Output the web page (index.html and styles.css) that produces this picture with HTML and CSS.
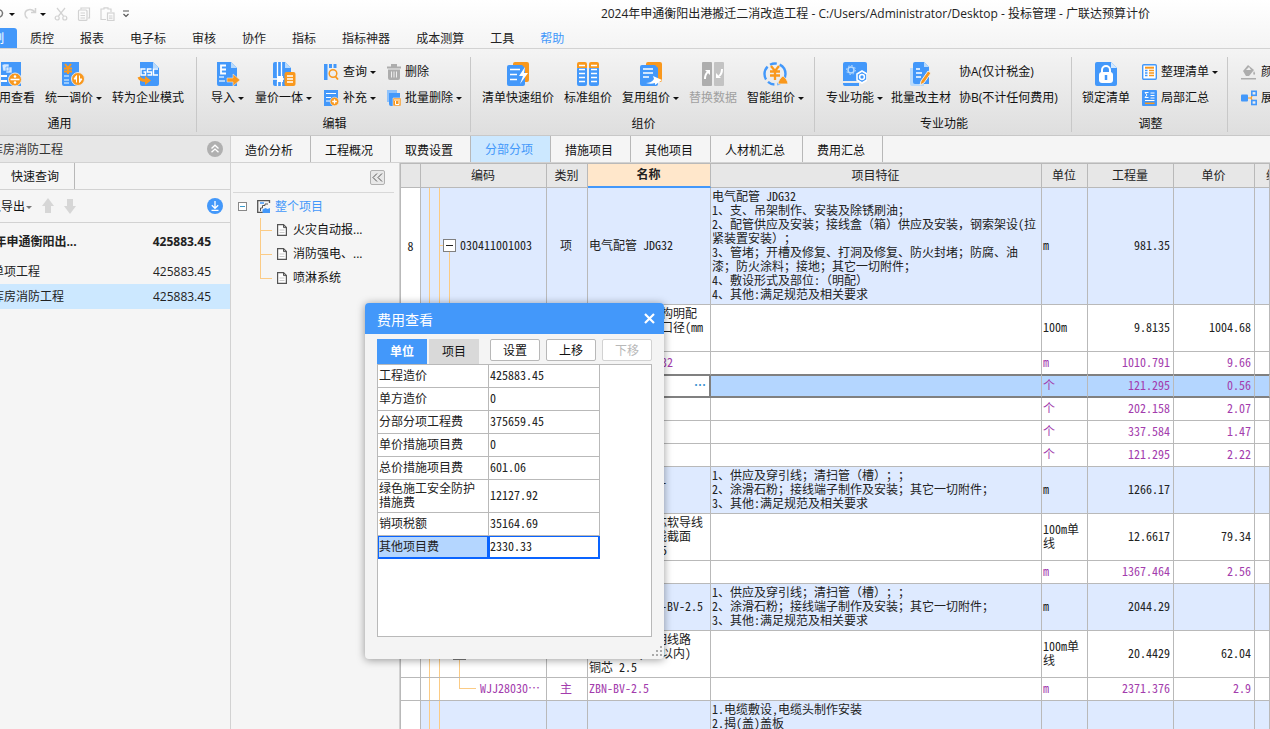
FILE: index.html
```html
<!DOCTYPE html>
<html lang="zh-CN">
<head>
<meta charset="utf-8">
<title>投标管理 - 广联达预算计价</title>
<link rel="stylesheet" href="styles.css">
</head>
<body>
<header class="top">
  <div class="titlebar">
    <div class="quick">
      <button class="qbtn undo" aria-label="撤销"><svg width="4" height="14" viewBox="6 0 4 14"><path d="M4 3c5-1 6 5 2 7" fill="none" stroke="#777" stroke-width="1.5"/></svg></button>
      <i class="caret"></i>
      <button class="qbtn redo" aria-label="恢复"><svg width="14" height="14" viewBox="0 0 14 14"><path d="M12.500 1v4.500h-4.500M12 5.500C9 1 2 2 2 7c0 2 1 3.500 2.500 4.500" fill="none" stroke="#d2d2d2" stroke-width="1.500"/></svg></button>
      <i class="caret"></i>
      <button class="qbtn cut" aria-label="剪切"><svg width="14" height="14" viewBox="0 0 14 14" fill="none" stroke="#d2d2d2" stroke-width="1.200"><path d="M3 1l6.500 8M11 1L4.500 9"/><circle cx="3.200" cy="11" r="2"/><circle cx="10.800" cy="11" r="2"/></svg></button>
      <button class="qbtn copy" aria-label="复制"><svg width="14" height="14" viewBox="0 0 14 14" fill="none" stroke="#d2d2d2" stroke-width="1.200"><path d="M4 2.500V1h8.500v10H11"/><rect x="1.500" y="3" width="8.500" height="10.400" rx="1"/><path d="M3.500 6h4.500M3.500 8.500h4.500M3.500 11h4.500"/></svg></button>
      <button class="qbtn paste" aria-label="粘贴"><svg width="15" height="14" viewBox="0 0 15 14" fill="none" stroke="#d2d2d2" stroke-width="1.200"><path d="M6 12.500H1V2h3V.800h4V2h3v3"/><rect x="7.500" y="6" width="6.500" height="7.500"/><path d="M9 9h3.500M9 11.200h3.500"/></svg></button>
      <button class="qbtn" aria-label="更多"><svg width="8" height="8" viewBox="0 0 8 8" fill="none" stroke="#555" stroke-width="1.200"><path d="M1 1h6M1.500 4l2.500 2.500L6.500 4"/></svg></button>
    </div>
    <h1 class="title">2024年申通衡阳出港搬迁二消改造工程 - C:/Users/Administrator/Desktop - 投标管理 - 广联达预算计价</h1>
  </div>
  <nav class="menu">
    <button class="mtab on">编制</button><button class="mtab">质控</button><button class="mtab">报表</button><button class="mtab">电子标</button><button class="mtab">审核</button><button class="mtab">协作</button><button class="mtab">指标</button><button class="mtab">指标神器</button><button class="mtab">成本测算</button><button class="mtab">工具</button><button class="mtab help">帮助</button>
  </nav>
</header>

<section class="ribbon">
  <div class="group g1">
    <div class="tools">
      <button class="big"><svg width="24" height="24" viewBox="0 0 24 24"><path d="M2 0h20v24H2z" fill="#4398fa"/><path d="M3 3l2-1h5v7H4zM7 5h6v6H7z" fill="#d4e9ff" stroke="#4398fa" stroke-width=".6"/><path d="M2 14h6M2 19h6" stroke="#fff" stroke-width="2"/><circle cx="16" cy="17.500" r="6.500" fill="#f9981d" stroke="#e9e9e9"/><path d="M11.500 17.500h9" stroke="#fff" stroke-width="1.600"/><circle cx="16" cy="14.500" r="1.300" fill="#fff"/><circle cx="16" cy="20.500" r="1.300" fill="#fff"/></svg><span>费用查看</span></button>
      <button class="big"><svg width="24" height="24" viewBox="0 0 24 24"><path d="M1 0h17v24H3a2 2 0 0 1-2-2z" fill="#4398fa"/><path d="M4 2l3 4 3-4M3 6.500h8M3 9.500h8M7 6v6" stroke="#f9981d" stroke-width="2" fill="none"/><path d="M3 14h5M3 18h5M3 21h5" stroke="#b8dafc" stroke-width="1.600"/><circle cx="17" cy="17" r="6.500" fill="#f9981d" stroke="#e8e8e8"/><path d="M15.500 20.500v-7l-2.500 3.500h2.500M18.500 13.500v7l2.500-3.500h-2.500" fill="#fff" stroke="#fff"/></svg><span>统一调价<i class="caret"></i></span></button>
      <button class="big"><svg width="24" height="24" viewBox="0 0 24 24"><path d="M4 0h13l6 6v16a2 2 0 0 1-2 2H6a2 2 0 0 1-2-2z" fill="#4398fa"/><path d="M17 0l6 6h-6z" fill="#b8dafc"/><path d="M9.500 7H5v6h4.500v-3H7.500M15.500 7h-4v3h4v3h-4M22 7h-4.500v6H22" stroke="#fff" stroke-width="1.400" fill="none"/><path d="M3 15c1 3 4 3.500 7 3.500" stroke="#f9981d" stroke-width="3" fill="none"/><path d="M9 14l6 4.500L9 23z" fill="#f9981d"/></svg><span>转为企业模式</span></button>
    </div>
    <div class="glabel">通用</div>
  </div>
  <div class="group g2">
    <div class="tools">
      <button class="big"><svg width="24" height="24" viewBox="0 0 24 24"><path d="M1 0h14l6 6v18H3a2 2 0 0 1-2-2z" fill="#4398fa"/><path d="M15 0l6 6h-6z" fill="#b8dafc"/><path d="M10 3.500H5v8h5M5 7.500h5" stroke="#fff" stroke-width="1.800" fill="none"/><path d="M3 15h5M3 19h6" stroke="#d4e9ff" stroke-width="1.600"/><path d="M11 16h6v-4l7 6-7 6v-4h-6z" fill="#f9981d" stroke="#e8e8e8" stroke-width=".6"/></svg><span>导入<i class="caret"></i></span></button>
      <button class="big"><svg width="24" height="24" viewBox="0 0 24 24"><path d="M3 0h10l6 6v18H3a2 2 0 0 1-2-2V2a2 2 0 0 1 2-2z" fill="#4398fa"/><path d="M13 0l6 6h-6z" fill="#b8dafc"/><path d="M5.500 0v15M9.500 0v24M5.500 19v5M1 17h11" stroke="#fff" stroke-width="1.300"/><path d="M5 14h6v6H5z" fill="#fff"/><rect x="12.500" y="10" width="11" height="14" rx="2" fill="#f9981d"/><path d="M15 14h6M15 17h6M15 20h6" stroke="#fff" stroke-width="1.500"/></svg><span>量价一体<i class="caret"></i></span></button>
      <div class="stack">
        <button class="small"><svg width="16" height="16" viewBox="0 0 16 16"><path d="M1 0h3.500v16H1zM6 0h3v4H6zM10.500 0h3v4h-3z" fill="#4398fa"/><circle cx="10" cy="9.500" r="3.800" fill="none" stroke="#f9981d" stroke-width="1.500"/><path d="M12.500 12.500L15 15.500" stroke="#f9981d" stroke-width="1.800"/></svg><span>查询<i class="caret"></i></span></button>
        <button class="small"><svg width="16" height="16" viewBox="0 0 16 16"><path d="M1 0h14v9l-6 7H1z" fill="#4398fa"/><path d="M3 3.500h10M3 7.500h5M3 11h4" stroke="#fff" stroke-width="1.200"/><circle cx="11.500" cy="11.500" r="4.300" fill="#f9981d" stroke="#eee" stroke-width=".6"/><path d="M9.200 11.500h4.600M11.500 9.200v4.600" stroke="#fff" stroke-width="1.300"/></svg><span>补充<i class="caret"></i></span></button>
      </div>
      <div class="stack">
        <button class="small"><svg width="14" height="16" viewBox="0 0 14 16"><path d="M0 2.500h14v2H0zM4 0h6v2.500H4zM1 5.500h12V14a2 2 0 0 1-2 2H3a2 2 0 0 1-2-2z" fill="#adadad"/><path d="M4.500 7.500v6M7 7.500v6M9.500 7.500v6" stroke="#eee"/></svg><span>删除</span></button>
        <button class="small"><svg width="14" height="16" viewBox="0 0 14 16"><path d="M0 0h10v12H0z" fill="#8fc2fb"/><path d="M2 3h11v13H4a2 2 0 0 1-2-2z" fill="#4398fa"/><path d="M6 8h8v8H6z" fill="#f9981d" stroke="#eee" stroke-width=".6"/><path d="M8.500 11v3.500h3.500V11M7 10h6" stroke="#fff" fill="none"/></svg><span>批量删除<i class="caret"></i></span></button>
      </div>
    </div>
    <div class="glabel">编辑</div>
  </div>
  <div class="group g3">
    <div class="tools">
      <button class="big"><svg width="24" height="24" viewBox="0 0 24 24"><rect x="7" width="16" height="20" rx="2" fill="#f9981d"/><path d="M3 3h13l3 3v16a2 2 0 0 1-2 2H3a2 2 0 0 1-2-2V5a2 2 0 0 1 2-2z" fill="#4398fa"/><path d="M4 7.500h10M4 12.500h7M4 17.500h7" stroke="#fff" stroke-width="1.600"/><path d="M19 5l-6 9h4l-3 8 8-11h-4z" fill="#fff"/></svg><span>清单快速组价</span></button>
      <button class="big"><svg width="24" height="24" viewBox="0 0 24 24"><rect x="1" y="5" width="10" height="19" rx="2" fill="#4398fa"/><rect x="13" y="5" width="10" height="19" rx="2" fill="#4398fa"/><path d="M1 2a2 2 0 0 1 2-2h6a2 2 0 0 1 2 2v4H1zM13 2a2 2 0 0 1 2-2h6a2 2 0 0 1 2 2v4H13z" fill="#f9981d"/><path d="M3 3.500h6M15 3.500h6M3 7.500h6M15 7.500h6M3 11.500h6M15 11.500h6M3 15.500h6M15 15.500h6M3 19.500h6M15 19.500h6" stroke="#fff" stroke-width="1.300"/></svg><span>标准组价</span></button>
      <button class="big"><svg width="24" height="24" viewBox="0 0 24 24"><rect x="7" width="16" height="20" rx="2" fill="#f9981d"/><path d="M3 3h13l3 3v16a2 2 0 0 1-2 2H3a2 2 0 0 1-2-2V5a2 2 0 0 1 2-2z" fill="#4398fa"/><path d="M4 7h10M4 11h10M4 15h6" stroke="#fff" stroke-width="1.600"/><path d="M7 21c3 0 6-1 8-4l-1-3 9 4-7 5v-2c-3 1-6 1-9 0z" fill="#fff"/></svg><span>复用组价<i class="caret"></i></span></button>
      <button class="big off" disabled><svg width="24" height="24" viewBox="0 0 24 24"><rect x="1" width="10" height="24" rx="1" fill="#adadad"/><rect x="13" width="10" height="24" rx="1" fill="#c3c3c3"/><path d="M4 17c0-3 0-5 3-7M21 7c0 3 0 5-3 7" stroke="#fff" stroke-width="2" fill="none"/><path d="M4 8h5v5zM15 11v5h5z" fill="#fff"/></svg><span>替换数据</span></button>
      <button class="big"><svg width="26" height="24" viewBox="0 0 26 24"><circle cx="12" cy="12" r="10.500" fill="none" stroke="#4398fa" stroke-width="2.400" stroke-dasharray="14 3 7 3"/><path d="M8 4l4 5 4-5M7 9.500h10M7 13.500h10M12 9v9" stroke="#f9981d" stroke-width="2.300" fill="none"/><path d="M20 14c2 1 5 5 5 8H15c0-3 3-7 5-8z" fill="#f9981d" stroke="#eee" stroke-width=".8"/></svg><span>智能组价<i class="caret"></i></span></button>
    </div>
    <div class="glabel">组价</div>
  </div>
  <div class="group g4">
    <div class="tools">
      <button class="big"><svg width="24" height="24" viewBox="0 0 24 24"><path d="M2 0h20a2 2 0 0 1 2 2v17H0V2a2 2 0 0 1 2-2z" fill="#4398fa"/><path d="M0 21h16v3H2a2 2 0 0 1-2-2z" fill="#4398fa"/><circle cx="8" cy="8" r="3" fill="none" stroke="#b8dafc" stroke-width="1.500"/><circle cx="8" cy="8" r="4.500" fill="none" stroke="#b8dafc" stroke-dasharray="1.500 2"/><path d="M19 9l5 3v6l-5 3-5-3v-6z" fill="#4398fa" stroke="#fff" stroke-width="1.600"/><circle cx="19" cy="15" r="2.400" fill="none" stroke="#fff" stroke-width="1.500"/></svg><span>专业功能<i class="caret"></i></span></button>
      <button class="big"><svg width="24" height="24" viewBox="0 0 24 24"><path d="M1 6h14v18H3a2 2 0 0 1-2-2z" fill="#b8dafc"/><path d="M6 0h9l5 5v17H6a2 2 0 0 1-2-2V2a2 2 0 0 1 2-2z" fill="#4398fa"/><path d="M15 0l5 5h-5z" fill="#b8dafc"/><path d="M7 7h4M7 11h6M7 15h5" stroke="#fff" stroke-width="1.500"/><path d="M19 9l3 2-7 10-4 2 1-4z" fill="#f9981d" stroke="#eee"/></svg><span>批量改主材</span></button>
      <div class="stack">
        <button class="small"><span>协A(仅计税金)</span></button>
        <button class="small"><span>协B(不计任何费用)</span></button>
      </div>
    </div>
    <div class="glabel">专业功能</div>
  </div>
  <div class="group g5">
    <div class="tools">
      <button class="big"><svg width="24" height="24" viewBox="0 0 24 24"><path d="M3 0h14l6 6v16a2 2 0 0 1-2 2H3a2 2 0 0 1-2-2V2a2 2 0 0 1 2-2z" fill="#4398fa"/><path d="M17 0l6 6h-6z" fill="#d4e9ff"/><rect x="5" y="10" width="14" height="11" rx="3" fill="#fff"/><path d="M8 11V8a4 4 0 0 1 8 0v3" stroke="#fff" stroke-width="2" fill="none"/><path d="M12 13v5" stroke="#4398fa" stroke-width="2.500"/></svg><span>锁定清单</span></button>
      <div class="stack">
        <button class="small"><svg width="15" height="16" viewBox="0 0 15 16"><rect x=".7" y=".7" width="13.600" height="14.600" rx="1" fill="#fff" stroke="#4398fa" stroke-width="1.400"/><path d="M3 3.700h9" stroke="#f9981d" stroke-width="2"/><path d="M3 6.500h2.500M3 9h2.500M3 11.500h2.500" stroke="#4398fa" stroke-width="1.400"/><path d="M7 6.500h5M7 9h5M7 11.500h5" stroke="#f9981d" stroke-width="1.400"/></svg><span>整理清单<i class="caret"></i></span></button>
        <button class="small"><svg width="15" height="16" viewBox="0 0 15 16"><rect width="15" height="16" rx="1" fill="#4398fa"/><path d="M6.500 2.500H3L5 5 3 7.500h3.500M8.500 3h4M8.500 5.500h4M8.500 8h4M3 10.500h9.500" stroke="#fff" fill="none"/><path d="M3 13.300h9.500" stroke="#f9981d" stroke-width="1.500"/></svg><span>局部汇总</span></button>
      </div>
    </div>
    <div class="glabel">调整</div>
  </div>
  <div class="group g6">
    <div class="tools">
      <div class="stack">
        <button class="small"><svg width="16" height="16" viewBox="0 0 16 16"><path d="M2 7l5-6 6 5-5 6H5z" fill="#adadad"/><path d="M5 6l3-3 2 3z" fill="#eee"/><path d="M13 7c1 2 2 3 0 4-1-1-1-2 0-4zM0 14h15v1.600H0z" fill="#adadad"/></svg><span>颜色</span></button>
        <button class="small"><svg width="16" height="16" viewBox="0 0 16 16"><path d="M7 8h3l2-4M10 8l2 4" stroke="#f9981d" stroke-width="1.200" fill="none"/><rect y="4.500" width="7" height="7" rx="1" fill="#4398fa"/><rect x="10.800" y="1.300" width="4.400" height="4" fill="#eee" stroke="#4398fa" stroke-width="1.600"/><rect x="10.800" y="10.500" width="4.400" height="4" fill="#eee" stroke="#4398fa" stroke-width="1.600"/></svg><span>展开到</span></button>
      </div>
    </div>
  </div>
</section>

<main class="work">
  <aside class="side">
    <div class="sidehead"><span class="cut1">仓库房消防工程</span>
      <button class="round" aria-label="收起"><svg width="16" height="16" viewBox="0 0 16 16"><circle cx="8" cy="8" r="8" fill="#b0b0b0"/><path d="M4.500 7.500L8 4.300l3.500 3.200M4.500 11.300L8 8.100l3.500 3.200" stroke="#fff" stroke-width="1.400" fill="none"/></svg></button>
    </div>
    <div class="sidetabs"><button class="stab">快速查询</button></div>
    <div class="sidetools">
      <button class="exp"><span class="expt">导入导出</span><i class="caret gray"></i></button>
      <button class="arr" aria-label="上移"><svg width="12" height="16" viewBox="0 0 12 16"><path d="M6 0l6 8H9v7H3V8H0z" fill="#d6d6d6"/></svg></button>
      <button class="arr" aria-label="下移"><svg width="12" height="16" viewBox="0 0 12 16"><path d="M6 16L0 8h3V1h6v7h3z" fill="#d6d6d6"/></svg></button>
      <button class="round" aria-label="下载"><svg width="16" height="16" viewBox="0 0 16 16"><circle cx="8" cy="8" r="8" fill="#4398fa"/><path d="M8 3v7M4.800 7.200L8 10.300l3.200-3.100M4.500 12.300h7" stroke="#fff" stroke-width="1.300" fill="none"/></svg></button>
    </div>
    <ul class="plist">
      <li class="first"><span class="n1">2024年申通衡阳出...</span><span>425883.45</span></li>
      <li><span class="n2">单项工程</span><span>425883.45</span></li>
      <li class="sel"><span class="n3">仓库房消防工程</span><span>425883.45</span></li>
    </ul>
  </aside>

  <div class="right">
    <nav class="mods">
      <button>造价分析</button><button>工程概况</button><button>取费设置</button><button class="on">分部分项</button><button>措施项目</button><button>其他项目</button><button>人材机汇总</button><button>费用汇总</button>
    </nav>
    <div class="panes">
      <div class="tree">
        <div class="treetop"><button class="fold" aria-label="折叠"><svg width="13" height="13" viewBox="0 0 13 13"><path d="M6 2.500l-4 4 4 4M11 2.500l-4 4 4 4" fill="none" stroke="#555" stroke-width="1"/></svg></button></div>
        <div class="root"><svg width="9" height="9" viewBox="0 0 9 9"><rect x=".5" y=".5" width="8" height="8" fill="#fff" stroke="#888"/><path d="M2 4.500h5" stroke="#3a9acb"/></svg>
          <svg width="14" height="13" viewBox="0 0 14 13"><path d="M12.500 3V.700H.700v11.600H6" fill="none" stroke="#555" stroke-width="1.300"/><path d="M3 3h4" stroke="#4398fa" stroke-width="1.500"/><path d="M3.500 11V8h2V5.500H8V4h3" fill="none" stroke="#555"/><path d="M5.500 9.500l3-1.500 2 1 2.500-1v5H5.500z" fill="#4398fa"/></svg>
          <span>整个项目</span></div>
        <ul class="leafs">
          <li><svg width="10" height="12" viewBox="0 0 10 12"><path d="M.6.600h5.900l2.900 3v7.800H.6z" fill="#fff" stroke="#555" stroke-width="1.200"/><path d="M6.500.600v3h2.900" fill="none" stroke="#555"/><path d="M2.500 6h5M2.500 8.500h5" stroke="#ccc"/></svg>火灾自动报...</li>
          <li><svg width="10" height="12" viewBox="0 0 10 12"><path d="M.6.600h5.900l2.900 3v7.800H.6z" fill="#fff" stroke="#555" stroke-width="1.200"/><path d="M6.500.600v3h2.900" fill="none" stroke="#555"/><path d="M2.500 6h5M2.500 8.500h5" stroke="#ccc"/></svg>消防强电、...</li>
          <li><svg width="10" height="12" viewBox="0 0 10 12"><path d="M.6.600h5.900l2.900 3v7.800H.6z" fill="#fff" stroke="#555" stroke-width="1.200"/><path d="M6.500.600v3h2.900" fill="none" stroke="#555"/><path d="M2.500 6h5M2.500 8.500h5" stroke="#ccc"/></svg>喷淋系统</li>
        </ul>
      </div>
      <div class="gridwrap">
        <table class="grid">
          <colgroup><col class="c1"><col class="c2"><col class="c3"><col class="c4"><col><col class="c6"><col class="c7"><col class="c8"><col class="c9"></colgroup>
          <thead><tr><th></th><th>编码</th><th>类别</th><th class="cur">名称</th><th>项目特征</th><th>单位</th><th>工程量</th><th>单价</th><th class="last">综合单价</th></tr></thead>
          <tbody>
            <tr class="blue"><td class="no">8</td><td class="code open"><div class="node"><b class="box"></b>030411001003</div></td><td class="mid">项</td><td>电气配管 JDG32</td><td>电气配管 JDG32<br>1、支、吊架制作、安装及除锈刷油；<br>2、配管供应及安装；接线盒<span class="fw">（箱）</span>供应及安装<span class="fw">，</span>钢索架设(拉<br>紧装置安装<span class="fw">）；</span><br>3、管堵；开槽及修复、打洞及修复、防火封堵；防腐、油<br>漆；防火涂料；接地；其它一切附件；<br>4、敷设形式及部位:<span class="fw">（明配）</span><br>4、其他:满足规范及相关要求</td><td>m</td><td class="num">981.35</td><td></td><td></td></tr>
            <tr><td></td><td class="code"></td><td></td><td>砖、混凝土结构明配<br>钢管敷设公称口径(mm<br>以内) 32</td><td></td><td>100m</td><td class="num">9.8135</td><td class="num">1004.68</td><td></td></tr>
            <tr class="mat pre"><td></td><td class="code"></td><td></td><td>电气配管 JDG32</td><td></td><td>m</td><td class="num">1010.791</td><td class="num">9.66</td><td></td></tr>
            <tr class="mat picked"><td></td><td class="code"></td><td></td><td class="edit"><button class="dots fw" aria-label="选择">…</button></td><td></td><td>个</td><td class="num">121.295</td><td class="num">0.56</td><td></td></tr>
            <tr class="mat"><td></td><td class="code"></td><td></td><td></td><td></td><td>个</td><td class="num">202.158</td><td class="num">2.07</td><td></td></tr>
            <tr class="mat"><td></td><td class="code"></td><td></td><td></td><td></td><td>个</td><td class="num">337.584</td><td class="num">1.47</td><td></td></tr>
            <tr class="mat"><td></td><td class="code"></td><td></td><td></td><td></td><td>个</td><td class="num">121.295</td><td class="num">2.22</td><td></td></tr>
            <tr class="blue"><td></td><td class="code"></td><td></td><td>电气配线 ZBN-<br>BVR-2.5</td><td>1、供应及穿引线；清扫管<span class="fw">（槽）；；</span><br>2、涂滑石粉；接线端子制作及安装；其它一切附件；<br>3、其他:满足规范及相关要求</td><td>m</td><td class="num">1266.17</td><td></td><td></td></tr>
            <tr><td></td><td class="code"></td><td></td><td>管内穿线 多芯软导线<br>二芯以内 导线截面<br>(mm2以内) 2.5</td><td></td><td>100m单<br>线</td><td class="num">12.6617</td><td class="num">79.34</td><td></td></tr>
            <tr class="mat"><td></td><td class="code"></td><td></td><td></td><td></td><td>m</td><td class="num">1367.464</td><td class="num">2.56</td><td></td></tr>
            <tr class="blue"><td></td><td class="code"></td><td></td><td>电气配线 ZBN-BV-2.5</td><td>1、供应及穿引线；清扫管<span class="fw">（槽）；；</span><br>2、涂滑石粉；接线端子制作及安装；其它一切附件；<br>3、其他:满足规范及相关要求</td><td>m</td><td class="num">2044.29</td><td></td><td></td></tr>
            <tr><td></td><td class="code parent"><div class="node deep"><b class="box"></b></div></td><td></td><td>管内穿线 照明线路<br>导线截面(mm2以内)<br>铜芯 2.5</td><td></td><td>100m单<br>线</td><td class="num">20.4429</td><td class="num">62.04</td><td></td></tr>
            <tr class="mat"><td></td><td class="code child"><div class="leafcode">WJJ28030<span class="fw">…</span></div></td><td class="mid">主</td><td>ZBN-BV-2.5</td><td></td><td>m</td><td class="num">2371.376</td><td class="num">2.9</td><td></td></tr>
            <tr class="blue"><td></td><td class="code"></td><td></td><td></td><td>1.电缆敷设,电缆头制作安装<br>2.揭(盖)盖板<br>3.其他</td><td></td><td></td><td></td><td></td></tr>
          </tbody>
        </table>
      </div>
    </div>
  </div>
</main>

<section class="dialog" role="dialog" aria-label="费用查看">
  <div class="dhead"><h2>费用查看</h2><button class="close" aria-label="关闭"><svg width="11" height="11" viewBox="0 0 11 11"><path d="M1 1l9 9M10 1l-9 9" stroke="#fff" stroke-width="2.200"/></svg></button></div>
  <div class="dbody">
    <div class="dbar">
      <button class="dtab on">单位</button><button class="dtab">项目</button>
      <div class="dbtns"><button>设置</button><button>上移</button><button disabled>下移</button></div>
    </div>
    <div class="dlist">
      <table class="fees">
        <tr><th scope="row">工程造价</th><td>425883.45</td></tr>
        <tr><th scope="row">单方造价</th><td>0</td></tr>
        <tr><th scope="row">分部分项工程费</th><td>375659.45</td></tr>
        <tr><th scope="row">单价措施项目费</th><td>0</td></tr>
        <tr><th scope="row">总价措施项目费</th><td>601.06</td></tr>
        <tr class="tall"><th scope="row">绿色施工安全防护<br>措施费</th><td>12127.92</td></tr>
        <tr><th scope="row">销项税额</th><td>35164.69</td></tr>
        <tr class="sel"><th scope="row">其他项目费</th><td>2330.33</td></tr>
      </table>
    </div>
  </div>
  <svg class="grip" width="11" height="11" viewBox="0 0 11 11" fill="#aaa"><path d="M8 0h2v2H8zM4 4h2v2H4zM8 4h2v2H8zM0 8h2v2H0zM4 8h2v2H4zM8 8h2v2H8z"/></svg>
</section>
</body>
</html>
```
FILE: styles.css
```css
* { box-sizing: border-box; }
body {
  margin: 0;
  height: 100vh;
  display: flex;
  flex-direction: column;
  overflow: hidden;
  position: relative;
  background: #f5f5f5;
  color: #111;
  font: 12px/16px "Open Sans", "Noto Sans CJK SC", sans-serif;
  white-space: nowrap;
}
button { font: inherit; color: inherit; background: none; border: 0; padding: 0; margin: 0; white-space: nowrap; }
svg { display: block; flex: none; }
h1, h2, ul { margin: 0; padding: 0; font-weight: normal; list-style: none; }
.caret { display: inline-block; border: 3px solid transparent; border-top-color: #111; border-bottom: 0; margin-left: 3px; vertical-align: 2px; flex: none; }
.caret.gray { border-top-color: #777; }

.top { background: linear-gradient(#fff, #f4f4f4); border-bottom: 1px solid #d2d2d2; flex: none; }
.titlebar { height: 28px; display: flex; align-items: center; }
.quick { display: flex; align-items: center; height: 24px; }
.quick .caret { margin: 0; }
.undo { width: 4px; margin-right: 5px; overflow: hidden; }
.redo { margin: 0 3px 0 8px; }
.cut { margin-left: 8px; }
.copy { margin-left: 9px; }
.paste { margin: 0 7px 0 9px; }
.title { flex: 1; padding-left: 351px; text-align: center; font-size: 12px; color: #222; }
.menu { display: flex; height: 20px; margin-left: -33px; }
.mtab { padding: 2px 13px 0; height: 20px; color: #222; }
.mtab.on { background: #4398fa; color: #fff; border-radius: 3px 3px 0 0; }
.mtab.help { color: #4398fa; }

.ribbon { flex: none; height: 87px; display: flex; overflow: hidden; background: linear-gradient(#f4f4f4, #dedede); border-bottom: 1px solid #c8c8c8; padding: 8px 0 3px; }
.group { flex: none; border-right: 1px solid #c8c8c8; display: flex; flex-direction: column; justify-content: space-between; padding-top: 5px; }
.tools { display: flex; gap: 8px; height: 44px; padding-left: 11px; }
.glabel { text-align: center; padding-left: 2px; }
.g1 { width: 276px; margin-left: -79px; }
.g1 .tools { justify-content: flex-end; padding-right: 12px; gap: 10px; }
.g2 { width: 274px; }
.g2 .tools { padding-left: 14px; gap: 11px; }
.g3 { width: 344px; }
.g3 .tools { gap: 10px; }
.g4 { width: 257px; }
.g5 { width: 156px; }
.g5 .tools { padding-left: 10px; gap: 12px; }
.g6 { border: 0; }
.g6 .tools { padding-left: 13px; }
.big { display: flex; flex-direction: column; align-items: center; gap: 4px; }
.off { color: #a0a0a0; }
.stack { display: flex; flex-direction: column; gap: 10px; align-items: flex-start; padding-top: 2px; }
.small { display: flex; align-items: center; gap: 4px; height: 16px; }

.work { flex: 1; min-height: 0; display: flex; }
.side { flex: none; width: 231px; border-right: 1px solid #d2d2d2; overflow: hidden; }
.sidehead { height: 27px; background: #e7e7e7; display: flex; align-items: center; justify-content: space-between; padding-right: 7px; border-bottom: 1px solid #d2d2d2; }
.cut1 { margin-left: -21px; padding-top: 1px; color: #333; }
.sidetabs { height: 27px; border-bottom: 1px solid #d2d2d2; display: flex; }
.stab { border-right: 1px solid #b8b8b8; padding: 2px 15px 0 11px; }
.sidetools { height: 33px; display: flex; align-items: center; border-bottom: 1px solid #d2d2d2; padding-right: 7px; }
.exp { display: flex; align-items: center; padding-top: 2px; }
.expt { margin-left: -23px; }
.exp .caret { margin-left: 1px; }
.arr { margin-left: 10px; }
.sidetools .round { margin-left: auto; }
.plist li { height: 25px; display: flex; align-items: center; justify-content: space-between; padding-right: 19px; color: #222; }
.plist .first { height: 36px; padding-top: 1px; font-weight: bold; }
.plist .sel { background: #cce8ff; }
.n1 { margin-left: -33px; }
.n2 { margin-left: -8px; }
.n3 { margin-left: -20px; }

.right { flex: 1; min-width: 0; display: flex; flex-direction: column; }
.mods { flex: none; height: 27px; display: flex; border-bottom: 1px solid #d2d2d2; }
.mods button { padding: 3px 17px 0 14px; border-right: 1px solid #b8b8b8; }
.mods .on { background: #cce8ff; color: #4398fa; padding-top: 1px; }
.panes { flex: 1; min-height: 0; display: flex; }
.tree { flex: none; width: 169px; border-right: 1px solid #d2d2d2; padding: 0 5px 0 2px; }
.treetop { height: 30px; border-bottom: 1px solid #d8d8d8; display: flex; justify-content: flex-end; align-items: center; padding-right: 9px; }
.fold { border: 1px solid #b0b0b0; border-radius: 2px; background: #e8e8e8; }
.root { display: flex; align-items: center; height: 24px; margin-top: 1px; padding-left: 5px; color: #4398fa; }
.root span { padding-top: 1px; }
.root svg + svg { margin: 0 4px 0 10px; }
.leafs { margin-left: 27px; }
.leafs li { display: flex; align-items: center; gap: 6px; height: 24px; padding-left: 17px; background: linear-gradient(#fbcb85, #fbcb85) 0 0 / 1px 24px no-repeat, linear-gradient(#fbcb85, #fbcb85) 0 12px / 12px 1px no-repeat; }
.leafs li:last-child { background-size: 1px 12px, 12px 1px; }

.gridwrap { flex: 1; min-width: 0; overflow: hidden; padding-top: 1px; background: #b9b9b9; }
table { border-collapse: separate; border-spacing: 0; }
.grid, .fees { font: 12px/14px "Noto Sans CJK SC", sans-serif; font-feature-settings: "hwid" 1; text-spacing-trim: space-all; color: #222; }
.fw { font-family: "Noto Sans CJK SC", sans-serif; font-feature-settings: normal; }
.grid { table-layout: fixed; width: 100%; background: #fff; }
.c1 { width: 21px; } .c2 { width: 126px; } .c3 { width: 41px; } .c4 { width: 123px; }
.c6 { width: 46px; } .c7 { width: 86px; } .c8 { width: 81px; } .c9 { width: 15px; }
.grid th { height: 24px; padding: 0 1px 2px 0; background: #e7e7e7; font-weight: normal; border-right: 1px solid #b9b9b9; border-bottom: 1px solid #b9b9b9; }
.grid .cur { background: #ffe7cb; font-weight: bold; border-bottom: 2px solid #4398fa; }
.grid .last { text-align: left; padding-left: 11px; overflow: hidden; }
.grid td { height: 23px; padding: 1px 3px 3px 1px; border-right: 1px solid #b9b9b9; border-bottom: 1px solid #b9b9b9; overflow: hidden; }
.grid td:first-child, .grid th:first-child { border-left: 1px solid #b9b9b9; }
.grid .no { text-align: center; padding: 0; }
.grid .mid { text-align: center; padding: 1px 2px 3px 0; }
.grid .num { text-align: right; }
.blue td { background-color: #deeaff; }
.blue td:first-child { background-color: #fff; }
.mat { color: #a33cad; }
.grid .code { padding: 0 0 2px; background-image: linear-gradient(#fbcb85, #fbcb85), linear-gradient(#fbcb85, #fbcb85); background-size: 1px 100%; background-position: 8px 0, 18px 0; background-repeat: no-repeat; }
.node { display: flex; align-items: center; gap: 4px; padding-left: 22px; background: linear-gradient(#fbcb85, #fbcb85) 18px center / 4px 1px no-repeat; }
.box { width: 13px; height: 13px; border: 1px solid #808080; background: linear-gradient(#222, #222) center / 7px 1px no-repeat #fff; }
.node.deep { padding-left: 32px; background: none; }
.leafcode { padding-left: 59px; background: linear-gradient(#fbcb85, #fbcb85) 38px 7px / 17px 1px no-repeat; }
.grid .open, .grid .child, .grid .parent { background-image: linear-gradient(#fbcb85, #fbcb85), linear-gradient(#fbcb85, #fbcb85), linear-gradient(#fbcb85, #fbcb85); }
.grid .open { background-position: 8px 0, 18px 0, 28px 100%; background-size: 1px 100%, 1px 100%, 1px 50%; }
.grid .child { background-position: 8px 0, 18px 0, 38px 0; background-size: 1px 100%, 1px 100%, 1px 10px; }
.grid .parent { background-position: 8px 0, 18px 0, 38px 100%; background-size: 1px 100%, 1px 100%, 1px 40%; }
.pre td { border-bottom-color: #808080; }
.picked td { background-color: #b4d6ff; border-bottom: 2px solid #808080; box-shadow: inset 0 1px #808080; padding-bottom: 2px; }
.picked .edit { background: #fff; border-right: 2px solid #808080; text-align: right; }
.dots { color: #3a8fd0; font-weight: bold; line-height: 14px; }

.dialog { position: absolute; left: 365px; top: 303px; width: 299px; background: #f4f4f4; border-radius: 4px; box-shadow: 0 1px 8px rgba(0, 0, 0, .4); }
.dhead { height: 31px; background: #4398fa; border-radius: 4px 4px 0 0; display: flex; align-items: center; justify-content: space-between; padding: 0 9px 0 12px; color: #fff; }
.dhead h2 { font-size: 14px; line-height: 20px; padding-top: 2px; }
.dbody { padding: 5px 12px 22px; }
.dbar { display: flex; gap: 2px; height: 25px; }
.dtab { width: 50px; background: #d9d9d9; }
.dtab.on { background: #4398fa; color: #fff; font-weight: bold; }
.dbtns { flex: 1; display: flex; justify-content: flex-end; gap: 6px; }
.dbtns button { width: 50px; height: 22px; padding-top: 2px; background: #fff; border: 1px solid #b8b8b8; border-radius: 2px; }
.dbtns button:disabled { color: #b8b8b8; border-color: #d2d2d2; }
.dlist { height: 273px; background: #fff; border: 1px solid #b9b9b9; }
.fees th, .fees td { width: 111px; height: 23px; padding: 0 1px 2px; text-align: left; font-weight: normal; border-right: 1px solid #b9b9b9; border-bottom: 1px solid #b9b9b9; }
.fees .tall th { height: 33px; }
.fees .sel th { background: #b4d6ff; box-shadow: inset 0 0 0 1px #0a64ff; border-color: #0a64ff; }
.fees .sel td { box-shadow: inset 0 0 0 1px #0a64ff; border-color: #0a64ff; }
.grip { position: absolute; right: 1px; bottom: 2px; }
```
